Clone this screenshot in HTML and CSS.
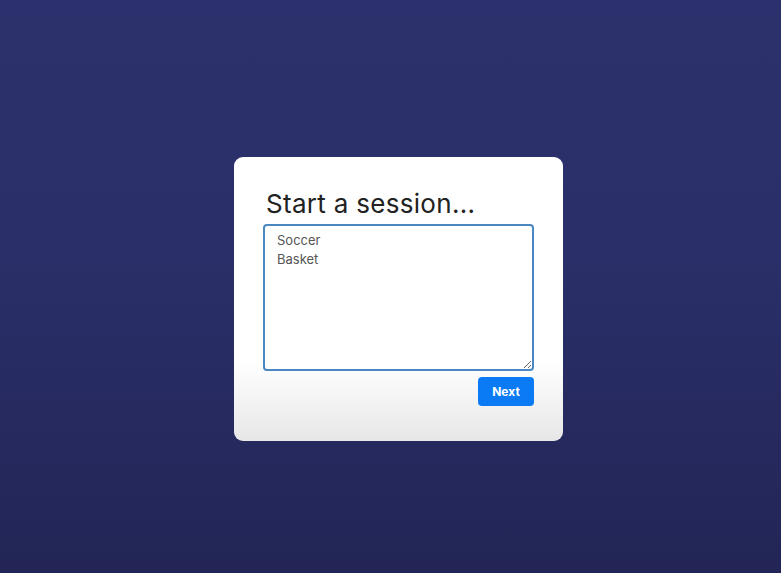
FILE: index.html
```html
<!DOCTYPE html>
<html>
<head>
<meta charset="utf-8">
<link rel="stylesheet" href="styles.css">
</head>
<body>
<main class="stage">
  <section class="card">
    <h1 class="title">Start a session...</h1>
    <textarea class="entry">Soccer
Basket</textarea>
    <div class="actions">
      <button class="next">Next</button>
    </div>
  </section>
</main>
</body>
</html>
```

FILE: styles.css
```css
html, body {
  margin: 0;
  height: 100%;
}
body {
  background: linear-gradient(180deg, #2c316d 0%, #2a2f69 45%, #222555 100%);
  font-family: Inter, "Noto Sans", sans-serif;
}
.stage {
  padding: 157px 0 0 234px;
}
.card {
  box-sizing: border-box;
  width: 329px;
  height: 284px;
  padding: 32px 29px 0 29px;
  border-radius: 9px;
  background: linear-gradient(180deg, #ffffff 0%, #ffffff 72%, #e7e7e7 100%);
  display: flex;
  flex-direction: column;
}
.title {
  margin: 0 0 5px 0;
  padding-left: 3px;
  font-size: 26px;
  line-height: 30px;
  letter-spacing: 0.3px;
  font-weight: 400;
  color: #222;
}
.entry {
  box-sizing: border-box;
  width: 271px;
  height: 147px;
  margin: 0;
  padding: 5px 12px;
  border: 2px solid #4b88c2;
  border-radius: 4px;
  font-family: Inter, "Noto Sans", sans-serif;
  font-size: 13px;
  line-height: 19px;
  color: #555;
  background: #fff;
  outline: none;
}
.actions {
  display: flex;
  justify-content: flex-end;
  margin-top: 6px;
}
.next {
  width: 56px;
  height: 29px;
  border: none;
  border-radius: 4px;
  background: #0b7bf5;
  color: #fff;
  font-family: Inter, "Noto Sans", sans-serif;
  font-weight: 700;
  font-size: 12px;
  padding: 0;
}
```
